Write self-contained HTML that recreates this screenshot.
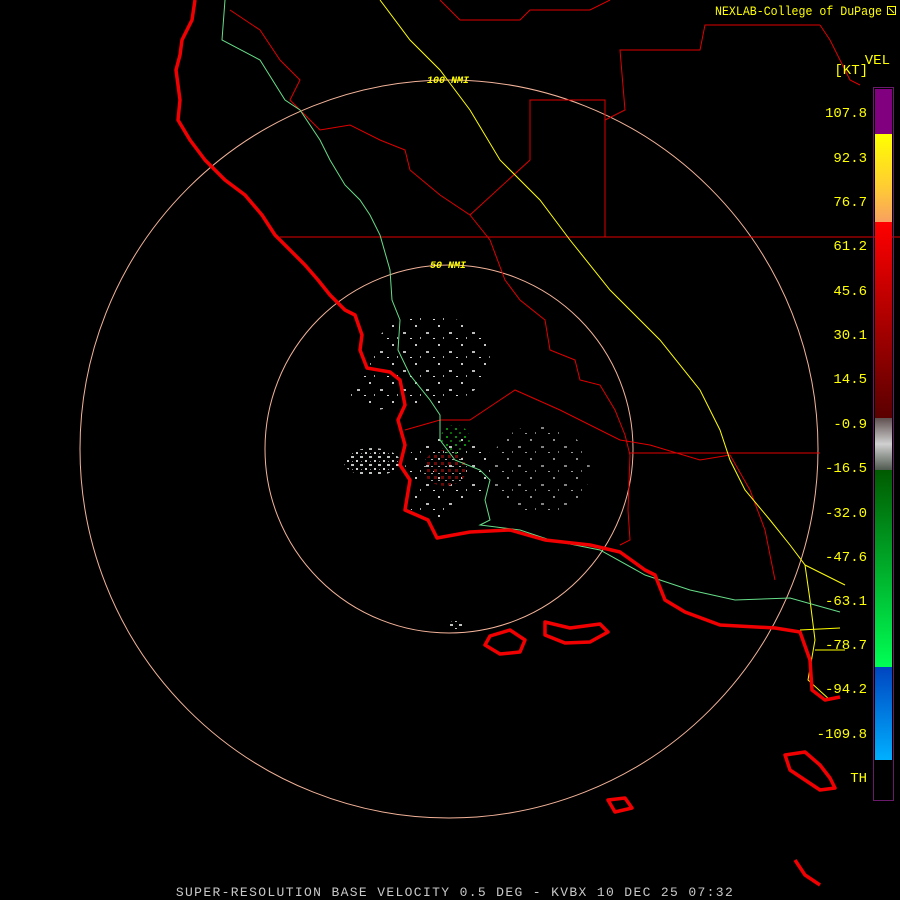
<!DOCTYPE html>
<html><head><style>
html,body{margin:0;padding:0;background:#000;width:900px;height:900px;overflow:hidden}
svg{position:absolute;left:0;top:0}
text{font-family:"Liberation Mono",monospace}
</style></head><body>
<svg width="900" height="900" viewBox="0 0 900 900">
<defs>
<pattern id="sp" width="23" height="19" patternUnits="userSpaceOnUse">
<rect x="1" y="2" width="2" height="2" fill="#c8c8c8"/><rect x="12" y="9" width="3" height="2" fill="#bbb"/><rect x="19" y="15" width="2" height="1" fill="#ddd"/><rect x="6" y="14" width="1" height="2" fill="#aaa"/>
</pattern>
<pattern id="sp2" width="9" height="8" patternUnits="userSpaceOnUse">
<rect x="0" y="0" width="3" height="2" fill="#c0c4c0"/><rect x="5" y="4" width="2" height="2" fill="#d0d0d0"/><rect x="1" y="5" width="1" height="1" fill="#888"/>
</pattern>
<pattern id="spr" width="7" height="7" patternUnits="userSpaceOnUse">
<rect x="0" y="0" width="3" height="3" fill="#6a0808"/><rect x="4" y="4" width="2" height="1" fill="#aaa"/>
</pattern>
<pattern id="spg" width="9" height="8" patternUnits="userSpaceOnUse">
<rect x="0" y="0" width="2" height="2" fill="#0a6a0a"/><rect x="5" y="4" width="2" height="2" fill="#0c8c0c"/>
</pattern>
</defs>
<ellipse cx="430" cy="360" rx="60" ry="45" fill="url(#sp)"/>
<ellipse cx="375" cy="390" rx="25" ry="20" fill="url(#sp)"/>
<ellipse cx="372" cy="462" rx="28" ry="14" fill="url(#sp2)"/>
<ellipse cx="450" cy="470" rx="45" ry="35" fill="url(#sp)"/>
<ellipse cx="445" cy="468" rx="22" ry="18" fill="url(#spr)"/>
<ellipse cx="455" cy="440" rx="15" ry="15" fill="url(#spg)"/>
<ellipse cx="540" cy="470" rx="50" ry="45" fill="url(#sp)" opacity="0.7"/>
<ellipse cx="430" cy="505" rx="20" ry="15" fill="url(#sp)"/>
<ellipse cx="455" cy="625" rx="8" ry="4" fill="url(#sp2)"/>
<circle cx="449" cy="449" r="184" fill="none" stroke="#f4b49a" stroke-width="1"/>
<circle cx="449" cy="449" r="369" fill="none" stroke="#f4b49a" stroke-width="1"/>
<text x="430" y="268" font-size="10" fill="#ffff00" font-style="italic" font-weight="bold" font-family="Liberation Sans">50 NMI</text>
<text x="427" y="83" font-size="10" fill="#ffff00" font-style="italic" font-weight="bold" font-family="Liberation Sans">100 NMI</text>
<g fill="none" stroke="#e00000" stroke-width="1">
<path d="M280 237H900"/>
<path d="M630 453H820"/>
<path d="M440 0L460 20H520L530 10H590L610 0"/>
<path d="M230 10L260 30L280 60L300 80L290 100L320 130L350 125L380 140L405 150L410 170L440 195L470 215L530 160L530 100L605 100L605 237"/>
<path d="M605 237V120L625 110L620 50L700 50L705 25H820"/>
<path d="M470 215L490 240L505 280L520 300L545 320L550 350L575 360L580 380L600 385L615 410L625 435L630 455L628 510L630 540L620 545"/>
<path d="M405 430L440 420L470 420L500 400L515 390L560 410L600 430L620 440L650 445L700 460L730 455L750 490L765 530L775 580"/>
<path d="M820 25L830 40L840 60L850 80L860 85"/>
</g>
<g fill="none" stroke="#ffff00" stroke-width="1">
<path d="M380 0L410 40L440 70L470 110L500 160L540 200L570 240L610 290L660 340L700 390L720 430L730 460L745 490L770 520L790 545L805 565L810 600L815 640L808 680L830 700"/>
<path d="M805 565L825 575L845 585"/>
<path d="M800 630L840 628M815 650L845 650"/>
</g>
<path d="M225 0L222 40L260 60L285 100L300 110L320 140L330 160L345 185L360 200L370 215L380 235L390 270L392 300L400 320L398 350L410 375L430 400L440 415L440 440L455 460L480 470L490 480L485 500L490 520L480 525L520 530L550 540L600 550L645 575L690 590L735 600L790 598L840 612" fill="none" stroke="#66dd88" stroke-width="1"/>
<g fill="none" stroke="#f00000" stroke-width="3.5" stroke-linejoin="round">
<path d="M195 0L192 20L182 40L180 55L176 70L180 100L178 120L190 140L205 160L225 180L245 195L262 215L275 235L290 250L305 265L318 280L330 295L345 310L355 315L362 335L360 350L367 368L390 372L400 380L405 405L398 420L405 445L400 465L410 480L405 510L428 520L437 538L470 532L510 530L545 540L590 545L620 552L645 570L655 575L665 600L685 612L720 625L775 628L800 632L810 660L812 690L825 700L840 697"/>
<path d="M490 636L510 630L525 640L520 652L500 654L485 645Z"/>
<path d="M545 622L570 628L600 624L608 632L590 642L565 643L545 635Z"/>
<path d="M785 755L805 752L820 765L830 778L835 788L820 790L805 780L790 770Z"/>
<path d="M608 800L625 798L632 808L615 812Z"/>
<path d="M795 860L805 875L820 885"/>
</g>
<rect x="873.5" y="87.5" width="20" height="713" fill="none" stroke="#6a1a6a" stroke-width="1"/>
<defs>
<linearGradient id="rd" x1="0" y1="0" x2="0" y2="1"><stop offset="0" stop-color="#ff0000"/><stop offset="1" stop-color="#5a0000"/></linearGradient>
<linearGradient id="yl" x1="0" y1="0" x2="0" y2="1"><stop offset="0" stop-color="#ffff00"/><stop offset="0.6" stop-color="#ffcc33"/><stop offset="1" stop-color="#f8a060"/></linearGradient>
<linearGradient id="gy" x1="0" y1="0" x2="0" y2="1"><stop offset="0" stop-color="#605050"/><stop offset="0.5" stop-color="#d0d0d0"/><stop offset="1" stop-color="#505a50"/></linearGradient>
<linearGradient id="gr" x1="0" y1="0" x2="0" y2="1"><stop offset="0" stop-color="#005a00"/><stop offset="1" stop-color="#00ff55"/></linearGradient>
<linearGradient id="bl" x1="0" y1="0" x2="0" y2="1"><stop offset="0" stop-color="#0045c0"/><stop offset="1" stop-color="#00b0ff"/></linearGradient>
</defs>
<rect x="875" y="89" width="17" height="45" fill="#800080"/>
<rect x="875" y="134" width="17" height="88" fill="url(#yl)"/>
<rect x="875" y="222" width="17" height="196" fill="url(#rd)"/>
<rect x="875" y="418" width="17" height="52" fill="url(#gy)"/>
<rect x="875" y="470" width="17" height="197" fill="url(#gr)"/>
<rect x="875" y="667" width="17" height="93" fill="url(#bl)"/>
<g font-size="14" fill="#ffff00" text-anchor="end">
<text x="867" y="117">107.8</text><text x="867" y="162">92.3</text><text x="867" y="206">76.7</text><text x="867" y="250">61.2</text><text x="867" y="295">45.6</text><text x="867" y="339">30.1</text><text x="867" y="383">14.5</text><text x="867" y="428">-0.9</text><text x="867" y="472">-16.5</text><text x="867" y="517">-32.0</text><text x="867" y="561">-47.6</text><text x="867" y="605">-63.1</text><text x="867" y="649">-78.7</text><text x="867" y="693">-94.2</text><text x="867" y="738">-109.8</text><text x="867" y="782">TH</text>
<text x="890" y="64">VEL</text><text x="868" y="74">[KT]</text>
</g>
<text x="715" y="15" font-size="12.5" fill="#ffff00" textLength="167" lengthAdjust="spacingAndGlyphs">NEXLAB-College of DuPage</text>
<path d="M887.5 6.5h8v8h-8zM889 8l5 5" fill="none" stroke="#ffff00" stroke-width="1"/>
<text x="455" y="896" font-size="13" fill="#c8c8c8" text-anchor="middle" letter-spacing="1.35">SUPER-RESOLUTION BASE VELOCITY 0.5 DEG - KVBX 10 DEC 25 07:32</text>
</svg>
</body></html>
